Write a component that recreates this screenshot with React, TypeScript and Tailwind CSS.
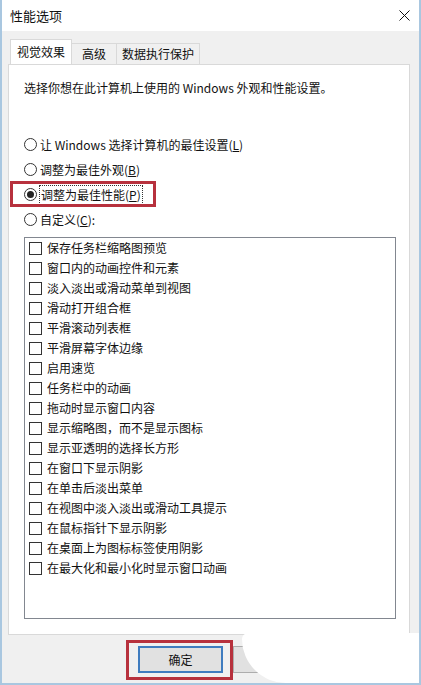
const items = [
  "保存任务栏缩略图预览",
  "窗口内的动画控件和元素",
  "淡入淡出或滑动菜单到视图",
  "滑动打开组合框",
  "平滑滚动列表框",
  "平滑屏幕字体边缘",
  "启用速览",
  "任务栏中的动画",
  "拖动时显示窗口内容",
  "显示缩略图，而不是显示图标",
  "显示亚透明的选择长方形",
  "在窗口下显示阴影",
  "在单击后淡出菜单",
  "在视图中淡入淡出或滑动工具提示",
  "在鼠标指针下显示阴影",
  "在桌面上为图标标签使用阴影",
  "在最大化和最小化时显示窗口动画",
];

function Radio({ checked, children }: { checked?: boolean; children: React.ReactNode }) {
  return (
    <div className="flex items-center h-[25px]">
      <span className="w-[13px] h-[13px] rounded-full border border-[#333] bg-white flex items-center justify-center">
        {checked && <span className="w-[7px] h-[7px] rounded-full bg-[#222]" />}
      </span>
      <span
        className={
          checked
            ? "ml-[2px] px-[1px] border border-dotted border-[#333] leading-[18px]"
            : "ml-[3px] leading-[18px]"
        }
      >
        {children}
      </span>
    </div>
  );
}

export default function App() {
  return (
    <div
      className="relative w-[421px] h-[685px] overflow-hidden bg-[#f0f0f0] text-[12px] text-[#111] border-x-2 border-b-2 border-[#a9c7e0] flex flex-col"
      style={{ fontFamily: '"Noto Sans CJK SC", "Liberation Sans", sans-serif' }}
    >
      {/* title bar */}
      <div className="h-[31px] bg-white flex items-center justify-between pl-[8px] pr-[9px] shrink-0">
        <span className="text-[13px]">性能选项</span>
        <svg width="11" height="11" viewBox="0 0 11 11" className="mb-[1px]">
          <path d="M0.5 0.5 L10.5 10.5 M10.5 0.5 L0.5 10.5" stroke="#111" strokeWidth="1" />
        </svg>
      </div>

      {/* body */}
      <div className="flex-1 pl-[6px] pr-[9px] pt-[9px]">
        {/* tabs */}
        <div className="flex items-end h-[24px] ml-[2px] relative z-10">
          <div className="h-[25px] w-[62px] bg-white border border-b-0 border-[#d9d9d9] flex items-center justify-center">
            视觉效果
          </div>
          <div className="h-[21px] w-[45px] bg-[#f0f0f0] border border-l-0 border-b-0 border-[#d9d9d9] flex items-center justify-center">
            高级
          </div>
          <div className="h-[21px] w-[83px] bg-[#f0f0f0] border border-l-0 border-b-0 border-[#d9d9d9] flex items-center justify-center">
            数据执行保护
          </div>
        </div>

        {/* panel */}
        <div className="h-[571px] bg-white border border-[#d9d9d9] pl-[15px] pr-[13px] pt-[15px]">
          <p className="leading-[16px]">选择你想在此计算机上使用的 Windows 外观和性能设置。</p>

          <div className="mt-[36px]">
            <Radio>
              让 Windows 选择计算机的最佳设置(<span className="underline">L</span>)
            </Radio>
            <Radio>
              调整为最佳外观(<span className="underline">B</span>)
            </Radio>
            <Radio checked>
              调整为最佳性能(<span className="underline">P</span>)
            </Radio>
            <Radio>
              自定义(<span className="underline">C</span>):
            </Radio>
          </div>

          <div className="mt-[5px] w-[372px] h-[382px] border border-[#828790] bg-white">
            {items.map((t) => (
              <div key={t} className="flex items-center h-[20px] pl-[4px]">
                <span className="w-[13px] h-[13px] border border-[#333] bg-white shrink-0" />
                <span className="ml-[5px]">{t}</span>
              </div>
            ))}
          </div>
        </div>

        {/* buttons */}
        <div className="flex mt-[11px] ml-[130px] gap-[10px]">
          <button className="w-[85px] h-[27px] bg-[#e1e1e1] border-2 border-[#3f7cbf] flex items-center justify-center text-[12px]">
            确定
          </button>
          <button className="w-[85px] h-[27px] bg-[#e1e1e1] border border-[#adadad] flex items-center justify-center text-[12px]">
            取消
          </button>
        </div>
      </div>

      {/* annotations */}
      <div className="absolute left-[8px] top-[181px] w-[146px] h-[26px] border-[3px] border-[#b7313d]" />
      <div className="absolute left-[124px] top-[640px] w-[107px] h-[40px] border-[3px] border-[#b7313d]" />
      <div className="absolute left-[240px] top-[633px] right-0 bottom-0 bg-white rounded-bl-[44px] rounded-tl-[6px]" />
    </div>
  );
}
